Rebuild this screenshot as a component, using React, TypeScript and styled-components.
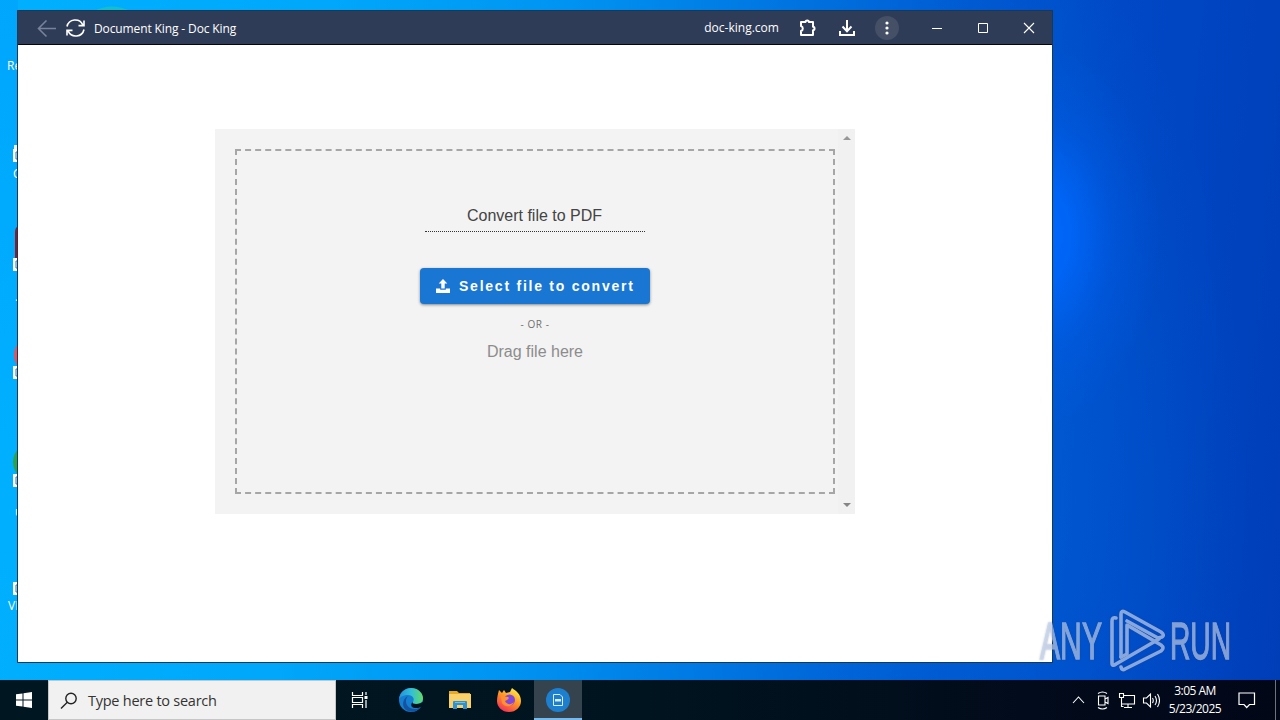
import styled, { createGlobalStyle } from 'styled-components'

const GlobalStyle = createGlobalStyle`
    * {
        box-sizing: border-box;
    }

    body {
        margin: 0;
        overflow: hidden;
        font-family: 'Open Sans', 'Noto Sans', sans-serif;
    }

    svg {
        display: block;
        flex: none;
    }
`

const Screen = styled.div`
    display: flex;
    flex-direction: column;
    height: 720px;
    position: relative;
    width: 1280px;
`

const Desktop = styled.div`
    background:
        radial-gradient(ellipse 120px 190px at 1040px 235px, #006aff 0%, rgb(0 104 255 / 80%) 25%, rgb(0 98 245 / 30%) 60%, rgb(0 90 230 / 0%) 100%),
        radial-gradient(ellipse 230px 560px at 1020px 500px, rgb(0 105 220 / 50%) 0%, rgb(0 90 210 / 0%) 100%),
        linear-gradient(95deg, #00b0ff 0%, #00a7fa 25%, #0094f2 42%, #0076e2 58%, #0057d0 74%, #0048c6 84%, #0042be 94%, #003eb8 100%);
    flex: 1;
    overflow: hidden;
    position: relative;
`

const LeftGlow = styled.div`
    background: linear-gradient(180deg, rgb(0 160 250 / 60%), rgb(0 176 255 / 80%) 70%, rgb(0 178 255 / 0%) 98%);
    height: 100%;
    width: 18px;
`

const DesktopLabel = styled.span<{ x: number; y: number }>`
    color: #fff;
    font-size: 12px;
    left: ${(props) => props.x}px;
    line-height: 16px;
    position: absolute;
    top: ${(props) => props.y}px;
    white-space: nowrap;
`

const DesktopIcons = styled.svg`
    left: 0;
    position: absolute;
    top: 0;
`

const AppWindow = styled.div`
    border: 1px solid #163a55;
    display: flex;
    flex-direction: column;
    height: 653px;
    left: 17px;
    position: absolute;
    top: 10px;
    width: 1036px;
`

const TitleBar = styled.div`
    align-items: center;
    background: #2f3c58;
    border-bottom: 1px solid #05070c;
    color: #fff;
    display: flex;
    height: 34px;
    padding-left: 19px;
`

const WindowTitle = styled.span`
    flex: 1;
    font-size: 12px;
    letter-spacing: -0.12px;
    padding: 1px 0 0 8px;
`

const Origin = styled.span`
    font-size: 12px;
    letter-spacing: 0.02px;
    margin: -1px 19px 0 0;
`

const MenuButton = styled.div`
    align-items: center;
    background: #454f66;
    border-radius: 50%;
    display: flex;
    height: 24px;
    justify-content: center;
    margin: 0 15px 0 18px;
    width: 24px;
`

const CaptionButton = styled.div`
    align-items: center;
    display: flex;
    height: 34px;
    justify-content: center;
    width: 46px;
`

const Page = styled.div`
    background: #fff;
    flex: 1;
    padding: 84px 0 0 197px;
`

const Panel = styled.div`
    background: #f3f3f3;
    display: flex;
    height: 385px;
    width: 640px;
`

const DropArea = styled.div`
    align-items: center;
    border: 2px dashed #a6a6a6;
    display: flex;
    flex-direction: column;
    height: 345px;
    margin: 20px 3px 0 20px;
    padding-top: 54px;
    width: 600px;
`

const ScrollTrack = styled.div`
    align-items: center;
    background: #f1f1f1;
    display: flex;
    flex: 1;
    flex-direction: column;
    justify-content: space-between;
    padding: 7px 0;
`

const Heading = styled.div`
    border-bottom: 1px dotted #333;
    color: #444;
    font-family: 'Liberation Sans', Arial, sans-serif;
    font-size: 16px;
    height: 27px;
    line-height: 21px;
    padding-right: 1px;
    text-align: center;
    width: 220px;
`

const SelectButton = styled.button`
    align-items: center;
    background: #1976d2;
    border: 0;
    border-radius: 4px;
    box-shadow: 0 1px 3px rgb(0 0 0 / 45%);
    color: #fff;
    display: flex;
    font-family: 'Liberation Sans', Arial, sans-serif;
    font-size: 14px;
    font-weight: 700;
    gap: 9px;
    height: 36px;
    letter-spacing: 1.76px;
    margin-top: 36px;
    padding: 0 0 0 16px;
    white-space: nowrap;
    width: 230px;
`

const Or = styled.div`
    color: #707070;
    font-size: 10px;
    letter-spacing: 0.6px;
    line-height: 14px;
    margin-top: 13px;
`

const DragHint = styled.div`
    color: #8c8c8c;
    font-family: 'Liberation Sans', Arial, sans-serif;
    font-size: 16px;
    line-height: 20px;
    margin-top: 11px;
`

const Taskbar = styled.div`
    background: linear-gradient(90deg, #001722 0%, #00141f 50%, #020b1b 80%, #020718 100%);
    display: flex;
    height: 40px;
`

const TaskButton = styled.div<{ active?: boolean }>`
    align-items: center;
    background: ${(props) => (props.active ? '#34434d' : 'transparent')};
    border-bottom: 2px solid ${(props) => (props.active ? '#76b9ed' : 'transparent')};
    display: flex;
    height: 40px;
    justify-content: center;
    padding-top: 1px;
    width: 48px;
`

const SearchBox = styled.div`
    align-items: center;
    background: #f1f1f1;
    border: 1px solid #c6c6c6;
    color: #333;
    display: flex;
    font-size: 14.5px;
    gap: 10px;
    letter-spacing: -0.25px;
    padding: 1px 0 0 11px;
    width: 288px;
`

const TaskApps = styled.div`
    display: flex;
    gap: 1px;
`

const Tray = styled.div`
    align-items: center;
    color: #fff;
    display: flex;
    margin-left: auto;
`

const Clock = styled.div`
    font-size: 12px;
    letter-spacing: -0.5px;
    line-height: 18px;
    margin: 0 16px 0 8px;
    text-align: center;
    width: 54px;
    white-space: nowrap;
`

const ShowDesktop = styled.div`
    border-left: 1px solid #6d7480;
    height: 40px;
    margin-left: 19px;
    width: 5px;
`

const Watermark = styled.svg`
    filter: drop-shadow(0 0 1px rgb(40 50 80 / 35%));
    left: 1030px;
    overflow: visible;
    position: absolute;
    top: 600px;
`

const Shortcuts = () => (
    <DesktopIcons width="140" height="670">
        <path d="M94 11 Q112 2 130 11Z" fill="#12bfd2" />
        <path d="M14 145h4v4h-4z" fill="#e8f5ff" />
        <path d="M18 226q-3 2-3 6v26h3z" fill="#9b1521" />
        <circle cx="32" cy="355" r="18" fill="#e9525c" />
        <circle cx="32" cy="462" r="19" fill="#2ba34c" />
        {[149, 258, 366, 474, 582].map((y) => (
            <g key={y}>
                <rect x="13" y={y} width="13" height="13" fill="#fff" />
                <path d={`M18 ${y + 3}h-2v7h2`} fill="none" stroke="#2778b5" />
            </g>
        ))}
    </DesktopIcons>
)

const BackIcon = () => (
    <svg width="20" height="20" fill="none" stroke="#78829a" strokeWidth="1.6">
        <path d="M19 10.5H2M9.5 2.5l-8 8 8 8" />
    </svg>
)

const ReloadIcon = () => (
    <svg width="21" height="20" fill="none" stroke="#fff" strokeWidth="1.6">
        <path d="M2 8.5A8.4 8.4 0 0 1 17.8 6.8M19 2.5v5.1h-5.5M19 11.5A8.4 8.4 0 0 1 3.2 13.2M2 17.5v-5.1h5.5" />
    </svg>
)

const PuzzleIcon = () => (
    <svg width="20" height="20" fill="none" stroke="#fff" strokeWidth="2" strokeLinejoin="round">
        <path d="M3 4h4.5q0-1.500 1.7-1.500t1.7 1.500H15v4.800q1.500 0 1.500 1.700t-1.500 1.700V17H3v-4q1.800-.4 1.800-2.500T3 8z" />
    </svg>
)

const DownloadIcon = () => (
    <svg width="20" height="20" fill="none" stroke="#fff" strokeWidth="2">
        <path d="M10 2v11M5.5 8.5l4.5 4.7 4.5-4.7M3 13v4h14v-4" />
    </svg>
)

const UploadIcon = () => (
    <svg width="14" height="14" viewBox="0 0 14 14" fill="#fff">
        <path d="M7 0l4.3 4.5H8.7V9.4H5.3V4.5H2.7zM0 9.5h4.2v1.2h5.6V9.5H14V14H0z" />
    </svg>
)

const EdgeIcon = () => (
    <svg width="26" height="26" viewBox="0 0 26 26">
        <defs>
            <linearGradient id="edgeTop" x1="0" x2="1">
                <stop offset="0" stopColor="#2292dc" />
                <stop offset=".5" stopColor="#32bed8" />
                <stop offset="1" stopColor="#62db68" />
            </linearGradient>
        </defs>
        <circle cx="13" cy="13" r="12" fill="#147ed0" />
        <path d="M1 12C2 5 7 1 13 1c7 0 12 5 12 10 0 4-3 6-7 6-3 0-4-1-3-2 2-3 0-7-5-7-4 0-8 2-9 4z" fill="url(#edgeTop)" />
        <path d="M10 9c-3 3-3 9 2 12 4 2 8 1 11-1-4 5-10 6-15 3-5-4-3-12 2-14z" fill="#1552a0" />
        <path d="M15 15c-1 1 0 2 3 2 3 0 6-1 8-3v4l-3 2c-2 1-4 1-6 1-4 0-5-4-2-6z" fill="#00141f" />
    </svg>
)

const FolderIcon = () => (
    <svg width="24" height="22" viewBox="0 0 24 22">
        <path d="M1 2h8l2 2h11v5H1z" fill="#e9a821" />
        <path d="M1 5h22v14H1z" fill="#f9d06a" />
        <path d="M5 20v-7q0-1 1-1h12q1 0 1 1v7h-4v-4H9v4z" fill="#2d91d2" />
        <path d="M7 13.5h10" stroke="#69c3ee" />
    </svg>
)

const FirefoxIcon = () => (
    <svg width="26" height="26" viewBox="0 0 26 26">
        <defs>
            <linearGradient id="fox" x1=".8" y1="0" x2=".2" y2="1">
                <stop offset="0" stopColor="#fff44f" />
                <stop offset=".45" stopColor="#ff9825" />
                <stop offset="1" stopColor="#f3285b" />
            </linearGradient>
        </defs>
        <path d="M3 3l3 3 2-3 2 3 4-1 2-4c4 3 9 6 9 13 0 6-5 11-12 11S1 20 1 14C1 10 2 7 3 3z" fill="url(#fox)" />
        <circle cx="13.5" cy="13" r="5.5" fill="#8148dc" />
        <path d="M5 9l7 1c2 1 0 3-3 4 2 4 6 4 9 1-2 5-9 6-12 1z" fill="#ff9134" />
    </svg>
)

const DocKingIcon = () => (
    <svg width="26" height="26" viewBox="0 0 26 26">
        <circle cx="13" cy="13" r="12" fill="#1d80ce" />
        <path d="M8.5 7.5h6.5l2.500 2.500v8.500H8.500z" fill="none" stroke="#d9edfc" strokeWidth="1" />
        <path d="M10 12h6v2.500h-6z" fill="#d9edfc" />
    </svg>
)

const AnyRunLogo = () => (
    <Watermark width="240" height="80">
        <g
            fill="#c3d3ee"
            stroke="#c3d3ee"
            strokeWidth="1.4"
            opacity=".66"
            fontFamily="'Liberation Sans Narrow', 'Liberation Sans', sans-serif"
            fontSize="51"
        >
            <text x="10" y="59" textLength="62" lengthAdjust="spacingAndGlyphs">ANY</text>
            <text x="140" y="59" textLength="61" lengthAdjust="spacingAndGlyphs">RUN</text>
        </g>
        <g fill="none" stroke="#b9cdf0" opacity=".72" strokeWidth="3.6" strokeLinejoin="round" strokeLinecap="round">
            <path d="M91 57V14q0-4 4-2l36 20q4 3 1 5l-4 1-31-17" />
            <path d="M86 18q-4-1-4 3v42q0 4 4 1l43-25" />
            <path d="M97 53V25l34 20q4 3 0 6L95 69q-3 2-4-2M91 57l6-3" />
        </g>
    </Watermark>
)

const App = () => (
    <Screen>
        <GlobalStyle />
        <Desktop>
            <LeftGlow />
            <Shortcuts />
            <DesktopLabel x={7} y={58}>Re</DesktopLabel>
            <DesktopLabel x={13} y={166}>C</DesktopLabel>
            <DesktopLabel x={15} y={289}>.</DesktopLabel>
            <DesktopLabel x={15} y={504}>u</DesktopLabel>
            <DesktopLabel x={8} y={598}>VL</DesktopLabel>
            <AppWindow>
                <TitleBar>
                    <BackIcon />
                    <svg width="8" height="1" />
                    <ReloadIcon />
                    <WindowTitle>Document King - Doc King</WindowTitle>
                    <Origin>doc-king.com</Origin>
                    <PuzzleIcon />
                    <svg width="19" height="1" />
                    <DownloadIcon />
                    <MenuButton>
                        <svg width="4" height="14" fill="#fff">
                            <circle cx="2" cy="2" r="1.6" />
                            <circle cx="2" cy="7" r="1.6" />
                            <circle cx="2" cy="12" r="1.6" />
                        </svg>
                    </MenuButton>
                    <CaptionButton>
                        <svg width="10" height="10"><path d="M0 5.5h10" stroke="#fff" /></svg>
                    </CaptionButton>
                    <CaptionButton>
                        <svg width="12" height="12"><path d="M1.5 1.5h9v9h-9z" fill="none" stroke="#fff" /></svg>
                    </CaptionButton>
                    <CaptionButton>
                        <svg width="12" height="12"><path d="M1 1l10 10m0-10l-10 10" stroke="#fff" strokeWidth="1.1" /></svg>
                    </CaptionButton>
                </TitleBar>
                <Page>
                    <Panel>
                        <DropArea>
                            <Heading>Convert file to PDF</Heading>
                            <SelectButton>
                                <UploadIcon />
                                Select file to convert
                            </SelectButton>
                            <Or>- OR -</Or>
                            <DragHint>Drag file here</DragHint>
                        </DropArea>
                        <ScrollTrack>
                            <svg width="8" height="4"><path d="M0 4l4-4 4 4z" fill="#989898" /></svg>
                            <svg width="8" height="4"><path d="M0 0l4 4 4-4z" fill="#858585" /></svg>
                        </ScrollTrack>
                    </Panel>
                </Page>
            </AppWindow>
        </Desktop>
        <Taskbar>
            <TaskButton>
                <svg width="16" height="16" fill="#fff">
                    <path d="M0 2.3l6.5-.9v6.1H0zM7.5 1.2L16 0v7.5H7.5zM0 8.5h6.5v6.1L0 13.7zM7.5 8.5H16V16l-8.5-1.2z" />
                </svg>
            </TaskButton>
            <SearchBox>
                <svg width="18" height="18" fill="none" stroke="#222" strokeWidth="1.4">
                    <circle cx="11" cy="6.5" r="5.2" />
                    <path d="M7.3 10.3L1 16.5" />
                </svg>
                Type here to search
            </SearchBox>
            <TaskApps>
                <TaskButton>
                    <svg width="18" height="18" fill="none" stroke="#fff" strokeWidth="1.2">
                        <path d="M1.5 1v3.5h10V1M1.5 17v-3.5h10V17M1.5 6.5h10v5h-10zM15 1v3M15 9v8" />
                        <path d="M13.5 5h3v3h-3z" fill="#fff" stroke="none" />
                    </svg>
                </TaskButton>
                <svg width="1" height="1" />
                <TaskButton><EdgeIcon /></TaskButton>
                <TaskButton><FolderIcon /></TaskButton>
                <TaskButton><FirefoxIcon /></TaskButton>
                <TaskButton active><DocKingIcon /></TaskButton>
            </TaskApps>
            <Tray>
                <svg width="88" height="22" fill="none" stroke="#fff" strokeWidth="1.1">
                    <path d="M1 14l5.5-6 5.5 6" />
                    <path d="M26.5 7h6.5v9h-6.5zM33 10l3-1.500v6l-3-1.500M26 4.500q4.500-3 9 0M26 18.500q4.500 3 9 0" />
                    <path d="M52 6.5h10.5v8.5H49.5v-3M56 15v3.5M52 18.5h8M47.5 4.5h4v4h-4zM49.5 8.5v9h2" />
                    <path d="M71.5 9h3l4-4v13l-4-4h-3zM80.5 9q1.500 2.500 0 5M83 7q3 4.500 0 9M85.500 5q4 6.500 0 13" />
                </svg>
                <Clock>
                    3:05 AM
                    <br />
                    5/23/2025
                </Clock>
                <svg width="18" height="18" fill="none" stroke="#fff" strokeWidth="1.2">
                    <path d="M1 2h15.5v11.5h-5L8.7 16.5 6 13.500H1z" />
                </svg>
                <ShowDesktop />
            </Tray>
        </Taskbar>
        <AnyRunLogo />
    </Screen>
)

export default App
